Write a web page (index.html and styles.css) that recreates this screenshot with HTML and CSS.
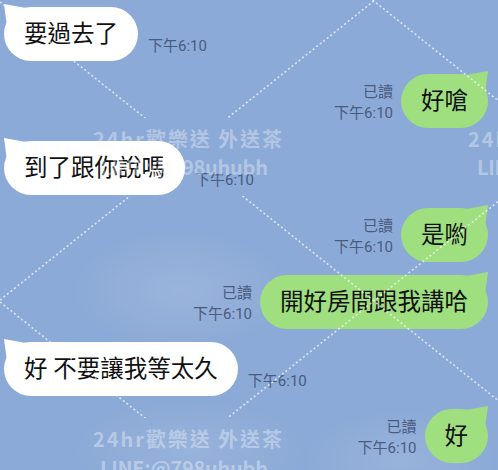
FILE: index.html
```html
<!DOCTYPE html>
<html lang="zh-Hant">
<head>
    <meta charset="UTF-8">
    <meta name="viewport" content="width=device-width, initial-scale=1.0">
    <title>LINE Chat</title>
    <link rel="stylesheet" href="styles.css">
</head>
<body>
    <div class="chat">
        <div class="row in">
            <div class="bubble">要過去了</div>
            <div class="meta">下午6:10</div>
        </div>
        <div class="row out">
            <div class="meta">已讀<br>下午6:10</div>
            <div class="bubble">好嗆</div>
        </div>
        <div class="row in">
            <div class="bubble">到了跟你說嗎</div>
            <div class="meta">下午6:10</div>
        </div>
        <div class="row out">
            <div class="meta">已讀<br>下午6:10</div>
            <div class="bubble">是喲</div>
        </div>
        <div class="row out">
            <div class="meta">已讀<br>下午6:10</div>
            <div class="bubble">開好房間跟我講哈</div>
        </div>
        <div class="row in">
            <div class="bubble">好 不要讓我等太久</div>
            <div class="meta">下午6:10</div>
        </div>
        <div class="row out">
            <div class="meta">已讀<br>下午6:10</div>
            <div class="bubble">好</div>
        </div>
    </div>

    <!-- watermark layer sits over the whole chat -->
    <svg class="watermark" width="498" height="470" viewBox="0 0 498 470">
        <defs>
            <mask id="gaps">
                <rect width="498" height="470" fill="#fff"/>
                <rect x="88" y="118" width="200" height="78" fill="#000"/>
                <rect x="463" y="118" width="200" height="78" fill="#000"/>
                <rect x="88" y="418" width="200" height="78" fill="#000"/>
            </mask>
        </defs>
        <g class="dots" mask="url(#gaps)">
            <line x1="372.5" y1="0" x2="498" y2="100.4"/>
            <line x1="0" y1="2" x2="498" y2="400.4"/>
            <line x1="0" y1="302" x2="210" y2="470"/>
            <line x1="0" y1="300" x2="375" y2="0"/>
            <line x1="162.5" y1="470" x2="498" y2="201.6"/>
        </g>
        <g class="wm">
            <text x="93" y="147" textLength="189" lengthAdjust="spacing">24hr歡樂送 外送茶</text>
            <text x="100" y="175" textLength="168" lengthAdjust="spacing">LINE:@798uhubh</text>
            <text x="468" y="147" textLength="189" lengthAdjust="spacing">24hr歡樂送 外送茶</text>
            <text x="477" y="175" textLength="168" lengthAdjust="spacing">LINE:@798uhubh</text>
            <text x="93" y="447" textLength="189" lengthAdjust="spacing">24hr歡樂送 外送茶</text>
            <text x="100" y="476" textLength="168" lengthAdjust="spacing">LINE:@798uhubh</text>
        </g>
    </svg>
</body>
</html>
```

FILE: styles.css
```css
body {
    margin: 0;
    width: 498px;
    height: 470px;
    overflow: hidden;
    position: relative;
    font-family: Roboto, "Noto Sans CJK TC", sans-serif;
    background-color: #8caad7;
    background-image:
        radial-gradient(ellipse 110px 60px at 180px 290px, rgba(255, 255, 255, 0.12), transparent),
        radial-gradient(ellipse 120px 50px at 190px 450px, rgba(255, 255, 255, 0.10), transparent),
        radial-gradient(ellipse 100px 50px at 400px 460px, rgba(255, 255, 255, 0.10), transparent);
}
.chat {
    display: flex;
    flex-direction: column;
    gap: 13px;
    padding-top: 7px;
}
.row {
    display: flex;
    align-items: flex-end;
}
.row.in {
    padding-left: 4px;
}
.row.out {
    justify-content: flex-end;
    padding-right: 10px;
}
.bubble {
    position: relative;
    font-size: 23.5px;
    line-height: 32px;
    padding: 11px 20px;
    border-radius: 27px;
    color: #111;
}
.bubble::before {
    content: "";
    position: absolute;
    top: -3px;
    width: 22px;
    height: 23px;
    background: inherit;
}
.in .bubble {
    background: #fff;
}
.in .bubble::before {
    left: 0;
    clip-path: polygon(0 0, 100% 17%, 14% 100%);
}
.out .bubble {
    background: #9fdf80;
}
.out .bubble::before {
    right: 0;
    clip-path: polygon(100% 0, 0 17%, 86% 100%);
}
.meta {
    font-size: 15px;
    line-height: 21px;
    color: #4a5b7f;
    margin-bottom: 4px;
}
.in .meta {
    margin-left: 10px;
}
.out .meta {
    margin-right: 8px;
    text-align: right;
}
.watermark {
    position: absolute;
    top: 0;
    left: 0;
    pointer-events: none;
}
.dots line {
    stroke: rgba(255, 255, 255, 0.7);
    stroke-width: 1.6;
    stroke-dasharray: 2 2.5;
}
.wm text {
    fill: rgba(255, 255, 255, 0.35);
    font-family: "Noto Sans CJK TC", sans-serif;
    font-weight: bold;
    font-size: 20px;
}
```
